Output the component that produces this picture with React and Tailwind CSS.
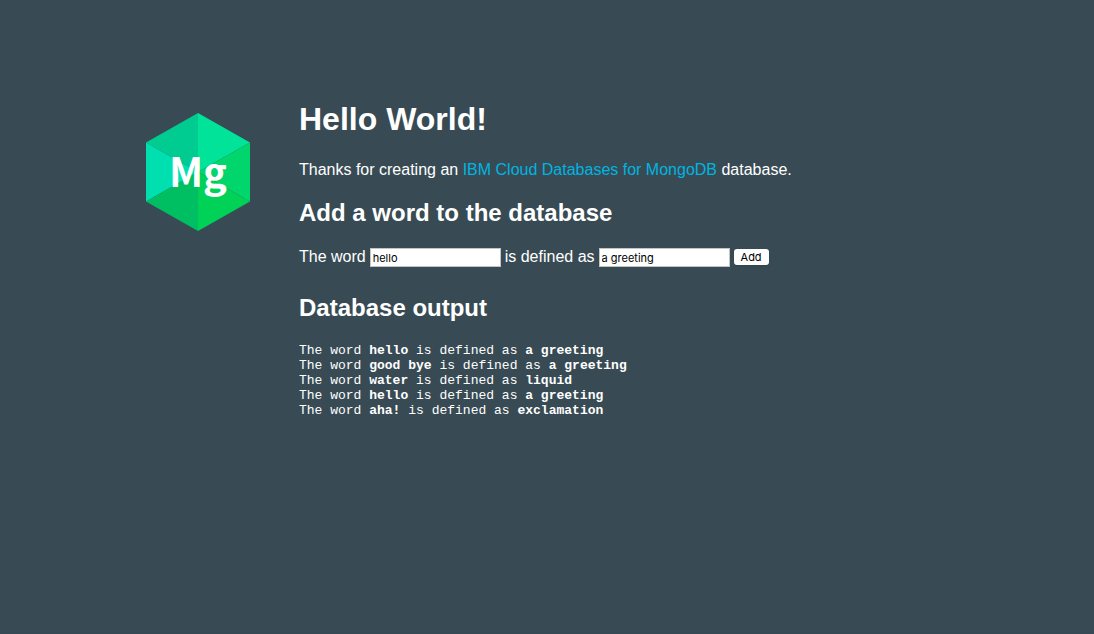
const entries = [
  { word: "hello", definition: "a greeting" },
  { word: "good bye", definition: "a greeting" },
  { word: "water", definition: "liquid" },
  { word: "hello", definition: "a greeting" },
  { word: "aha!", definition: "exclamation" },
];

function Logo() {
  return (
    <svg viewBox="0 0 104 118" className="mt-3 w-26 shrink-0" role="img" aria-label="MongoDB">
      <path d="M52 0 0 29.5 52 59Z" fill="#00cc92" />
      <path d="M52 0 104 29.5 52 59Z" fill="#00e399" />
      <path d="M0 29.5 52 59 0 88.5Z" fill="#00dfb0" />
      <path d="M104 29.5 52 59 104 88.5Z" fill="#00d66b" />
      <path d="M0 88.5 52 59V118Z" fill="#00bf63" />
      <path d="M104 88.5 52 59V118Z" fill="#00d157" />
      <text
        x="52"
        y="74"
        textAnchor="middle"
        fill="#fff"
        className="font-['Noto_Sans_CJK_SC',sans-serif] text-[40px] font-bold"
      >
        Mg
      </text>
    </svg>
  );
}

const inputStyle =
  "h-[19px] w-[131px] border border-[#c4c4c4] bg-white px-[2px] pt-px font-['Inter',sans-serif] text-[11px] text-black";

export default function App() {
  return (
    <main className="flex min-h-screen items-start gap-12 border-b border-[#36485a] bg-[#384b54] pt-[101px] pr-8 pl-[146px] font-['Liberation_Sans',Arial,sans-serif] text-base text-white">
      <Logo />
      <div className="min-w-0 pl-px">
        <h1 className="text-[32px] leading-9 font-bold">Hello World!</h1>
        <p className="mt-6 leading-[18px]">
          Thanks for creating an{" "}
          <a href="#mongodb" className="text-[#00b4e0]">
            IBM Cloud Databases for MongoDB
          </a>{" "}
          database.
        </p>
        <h2 className="mt-5 text-2xl leading-7 font-bold">Add a word to the database</h2>
        <form className="mt-5 flex flex-wrap items-center gap-1 leading-5" onSubmit={(e) => e.preventDefault()}>
          <label htmlFor="word">The word</label>
          <input id="word" type="text" defaultValue="hello" className={inputStyle} />
          <label htmlFor="definition">is defined as</label>
          <input id="definition" type="text" defaultValue="a greeting" className={inputStyle} />
          <button
            type="submit"
            className="h-4 rounded-[3px] bg-white px-[7px] font-['Inter',sans-serif] text-[11px] leading-4 text-black shadow-sm"
          >
            Add
          </button>
        </form>
        <h2 className="mt-[27px] text-2xl leading-7 font-bold">Database output</h2>
        <div className="mt-[21px] font-['Liberation_Mono',monospace] text-[13px] leading-[15px]">
          {entries.map(({ word, definition }, i) => (
            <p key={i}>
              The word <b>{word}</b> is defined as <b>{definition}</b>
            </p>
          ))}
        </div>
      </div>
    </main>
  );
}
